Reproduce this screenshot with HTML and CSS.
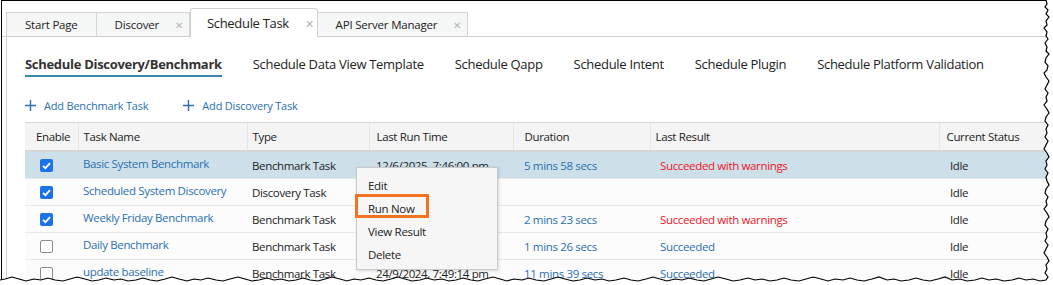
FILE: index.html
```html
<!doctype html>
<html>
<head>
<meta charset="utf-8">
<title>Schedule Task</title>
<link rel="stylesheet" href="styles.css">
</head>
<body>
<div class="shot">
  <div class="window">
    <div class="tabs">
      <div class="tab first">Start Page</div>
      <div class="tab">Discover <span class="close">&#x2715;</span></div>
      <div class="tab active">Schedule Task <span class="close">&#x2715;</span></div>
      <div class="tab">API Server Manager <span class="close">&#x2715;</span></div>
    </div>

    <div class="panel">
      <div class="subtabs">
        <span class="subtab current">Schedule Discovery/Benchmark</span>
        <span class="subtab">Schedule Data View Template</span>
        <span class="subtab">Schedule Qapp</span>
        <span class="subtab">Schedule Intent</span>
        <span class="subtab">Schedule Plugin</span>
        <span class="subtab">Schedule Platform Validation</span>
      </div>

      <div class="actions">
        <a class="add"><svg width="11" height="11" viewBox="0 0 11 11"><path d="M5.5 0v11M0 5.5h11" stroke="#2a70b3" stroke-width="1.4"/></svg>Add Benchmark Task</a>
        <a class="add"><svg width="11" height="11" viewBox="0 0 11 11"><path d="M5.5 0v11M0 5.5h11" stroke="#2a70b3" stroke-width="1.4"/></svg>Add Discovery Task</a>
      </div>

      <table class="grid">
        <colgroup>
          <col class="c-enable"><col class="c-name"><col class="c-type"><col class="c-time"><col class="c-dur"><col class="c-res"><col class="c-stat">
        </colgroup>
        <thead>
          <tr>
            <th class="enable">Enable</th>
            <th>Task Name</th>
            <th>Type</th>
            <th class="time">Last Run Time</th>
            <th class="dur">Duration</th>
            <th>Last Result</th>
            <th class="stat">Current Status</th>
          </tr>
        </thead>
        <tbody>
          <tr class="selected">
            <td class="enable"><span class="check on"></span></td>
            <td><a class="link name">Basic System Benchmark</a></td>
            <td class="type">Benchmark Task</td>
            <td class="time">12/6/2025, 7:46:00 pm</td>
            <td class="dur link">5 mins 58 secs</td>
            <td class="res warn">Succeeded with warnings</td>
            <td class="stat">Idle</td>
          </tr>
          <tr>
            <td class="enable"><span class="check on"></span></td>
            <td><a class="link name">Scheduled System Discovery</a></td>
            <td class="type">Discovery Task</td>
            <td class="time"></td>
            <td class="dur link"></td>
            <td class="res"></td>
            <td class="stat">Idle</td>
          </tr>
          <tr>
            <td class="enable"><span class="check on"></span></td>
            <td><a class="link name">Weekly Friday Benchmark</a></td>
            <td class="type">Benchmark Task</td>
            <td class="time">14/6/2025, 9:00:00 pm</td>
            <td class="dur link">2 mins 23 secs</td>
            <td class="res warn">Succeeded with warnings</td>
            <td class="stat">Idle</td>
          </tr>
          <tr>
            <td class="enable"><span class="check"></span></td>
            <td><a class="link name">Daily Benchmark</a></td>
            <td class="type">Benchmark Task</td>
            <td class="time">2/10/2024, 1:00:00 am</td>
            <td class="dur link">1 mins 26 secs</td>
            <td class="res ok">Succeeded</td>
            <td class="stat">Idle</td>
          </tr>
          <tr>
            <td class="enable"><span class="check"></span></td>
            <td><a class="link name">update baseline</a></td>
            <td class="type">Benchmark Task</td>
            <td class="time">24/9/2024, 7:49:14 pm</td>
            <td class="dur link">11 mins 39 secs</td>
            <td class="res ok">Succeeded</td>
            <td class="stat">Idle</td>
          </tr>
        </tbody>
      </table>
    </div>
  </div>

  <ul class="menu">
    <li>Edit</li>
    <li>Run Now</li>
    <li>View Result</li>
    <li>Delete</li>
  </ul>
  <div class="callout"></div>

  <svg class="torn" width="1053" height="285" viewBox="0 0 1053 285">
    <path fill="#fff" d="M1053 0 L1046 0 1047 4 1045 7 1048 10 1046 14 1049 17 1046 21 1047 25 1044 28 1047 32 1046 36 1048 39 1045 43 1047 47 1046 51 1049 54 1046 58 1045 62 1048 66 1047 70 1044 73 1046 77 1049 81 1047 85 1045 89 1048 93 1046 97 1047 101 1044 105 1047 109 1049 113 1046 117 1045 121 1048 125 1046 129 1047 133 1045 137 1048 141 1046 145 1044 149 1047 153 1049 157 1046 161 1047 165 1045 169 1048 173 1046 177 1047 181 1049 185 1046 189 1045 193 1048 197 1046 201 1047 205 1044 209 1047 213 1049 217 1046 221 1045 225 1048 229 1046 233 1047 237 1045 241 1048 245 1046 249 1044 253 1047 257 1049 261 1046 265 1047 269 1045 273 1048 277 1046 280 1040 281 1033 279 1026 280 1019 278 1012 280 1004 281 996 279 989 280 982 278 975 280 967 281 960 279 952 280 945 277 938 279 930 281 923 280 916 278 909 280 901 281 894 279 887 280 879 277 872 279 864 281 857 280 850 278 843 280 835 279 828 281 821 279 813 277 806 279 799 281 791 280 784 278 777 280 770 281 762 279 755 280 748 278 740 280 733 281 726 279 718 277 711 279 704 281 697 280 689 278 682 280 675 279 667 281 660 279 653 277 646 279 638 281 631 280 624 278 616 280 609 281 602 279 595 280 587 278 580 280 573 281 565 279 558 277 551 279 544 281 536 280 529 278 522 280 514 279 507 281 500 279 493 277 485 279 478 281 471 280 463 278 456 280 449 281 442 279 434 280 427 278 420 280 412 281 405 279 398 277 391 279 383 281 376 280 369 278 361 280 354 279 347 281 340 279 332 277 325 279 318 281 310 280 303 278 296 280 289 281 281 279 274 280 267 278 259 280 252 281 245 279 238 277 230 279 223 281 216 280 208 278 201 280 194 279 187 281 179 279 172 277 165 279 157 281 150 280 143 278 136 280 128 281 121 279 114 280 106 278 99 280 92 281 85 279 77 277 70 279 63 281 55 280 48 278 41 280 34 279 26 281 19 279 12 277 5 279 0 280 L0 285 L1053 285 Z"/>
    <path fill="none" stroke="#000" stroke-width="1.2" d="M1046 0 L1047 4 1045 7 1048 10 1046 14 1049 17 1046 21 1047 25 1044 28 1047 32 1046 36 1048 39 1045 43 1047 47 1046 51 1049 54 1046 58 1045 62 1048 66 1047 70 1044 73 1046 77 1049 81 1047 85 1045 89 1048 93 1046 97 1047 101 1044 105 1047 109 1049 113 1046 117 1045 121 1048 125 1046 129 1047 133 1045 137 1048 141 1046 145 1044 149 1047 153 1049 157 1046 161 1047 165 1045 169 1048 173 1046 177 1047 181 1049 185 1046 189 1045 193 1048 197 1046 201 1047 205 1044 209 1047 213 1049 217 1046 221 1045 225 1048 229 1046 233 1047 237 1045 241 1048 245 1046 249 1044 253 1047 257 1049 261 1046 265 1047 269 1045 273 1048 277 1046 280 1040 281 1033 279 1026 280 1019 278 1012 280 1004 281 996 279 989 280 982 278 975 280 967 281 960 279 952 280 945 277 938 279 930 281 923 280 916 278 909 280 901 281 894 279 887 280 879 277 872 279 864 281 857 280 850 278 843 280 835 279 828 281 821 279 813 277 806 279 799 281 791 280 784 278 777 280 770 281 762 279 755 280 748 278 740 280 733 281 726 279 718 277 711 279 704 281 697 280 689 278 682 280 675 279 667 281 660 279 653 277 646 279 638 281 631 280 624 278 616 280 609 281 602 279 595 280 587 278 580 280 573 281 565 279 558 277 551 279 544 281 536 280 529 278 522 280 514 279 507 281 500 279 493 277 485 279 478 281 471 280 463 278 456 280 449 281 442 279 434 280 427 278 420 280 412 281 405 279 398 277 391 279 383 281 376 280 369 278 361 280 354 279 347 281 340 279 332 277 325 279 318 281 310 280 303 278 296 280 289 281 281 279 274 280 267 278 259 280 252 281 245 279 238 277 230 279 223 281 216 280 208 278 201 280 194 279 187 281 179 279 172 277 165 279 157 281 150 280 143 278 136 280 128 281 121 279 114 280 106 278 99 280 92 281 85 279 77 277 70 279 63 281 55 280 48 278 41 280 34 279 26 281 19 279 12 277 5 279 0 280"/>
  </svg>
</div>
</body>
</html>
```

FILE: styles.css
```css
html, body { margin:0; padding:0; background:#fff; }

.shot {
  position:relative;
  width:1053px;
  height:285px;
  overflow:hidden;
  font-family:"Open Sans", "Noto Sans", sans-serif;
  color:#222;
}

.window {
  margin-left:1px;
  height:100%;
  border-left:1px solid #000;
  border-top:1px solid #000;
  box-sizing:border-box;
}

/* top tabs */
.tabs {
  display:flex;
  align-items:flex-end;
  padding:7px 0 0 4px;
  border-bottom:1px solid #cfcfcf;
}

.tab {
  display:flex;
  align-items:center;
  height:23px;
  padding:0 6px 0 18px;
  font-size:11.5px;
  letter-spacing:-0.2px;
  color:#222;
  background:#f5f6f6;
  border:1px solid #d4d4d4;
  border-bottom:none;
  border-left:none;
}
.tab.first { border-left:1px solid #d4d4d4; padding-right:18px; }

.tab .close {
  margin-left:16px;
  font-size:10px;
  color:#b5b5b5;
}

.tab.active {
  height:28px;
  margin-bottom:-1px;
  padding-left:16px;
  padding-right:3px;
  font-size:13px;
  letter-spacing:-0.3px;
  background:#fff;
  border:1px solid #cfcfcf;
  border-bottom:none;
  border-radius:3px 3px 0 0;
}
.tab.active .close { margin-left:16px; font-size:11px; }

/* panel */
.panel {
  margin-left:4px;
  height:100%;
  padding-left:18px;
  border-left:1px solid #cfcfcf;
}

.subtabs {
  display:flex;
  gap:31px;
  padding-top:18px;
}
.subtab {
  font-size:13px;
  letter-spacing:-0.3px;
  line-height:18px;
  padding-bottom:2px;
  color:#222;
}
.subtab.current {
  font-weight:bold;
  color:#333;
  border-bottom:2px solid #3a87b0;
}

.actions {
  display:flex;
  gap:35px;
  padding-top:19px;
  height:18px;
}
.add {
  display:flex;
  align-items:center;
  gap:8px;
  font-size:11px;
  letter-spacing:-0.2px;
  color:#2a70b3;
}

/* grid */
.grid {
  margin-top:8px;
  width:1100px;
  table-layout:fixed;
  border-collapse:collapse;
  font-size:11.5px;
  letter-spacing:-0.35px;
}
.c-enable { width:53px; }
.c-name { width:169px; }
.c-type { width:122px; }
.c-time { width:144px; }
.c-dur { width:137px; }
.c-res { width:289px; }
.c-stat { width:186px; }

.grid th {
  height:27px;
  padding:0 0 0 5px;
  text-align:left;
  font-weight:normal;
  color:#222;
  background:#f4f4f4;
  border-top:1px solid #d6d6d6;
  border-bottom:2px solid #d6d6d6;
  border-left:1px solid #e6e6e6;
}
.grid th.enable { border-left:none; padding-left:11px; }
.grid th.time { padding-left:7px; }
.grid th.dur { padding-left:11px; }
.grid th.stat { padding-left:7px; }

.grid td {
  height:26px;
  padding:0 0 0 5px;
  border-bottom:1px solid #e8e8e8;
  background:#fcfcfc;
  white-space:nowrap;
}
.grid tr.selected td { background:#cde0ea; }
.grid td.enable { padding-left:15px; }
.grid td.time { padding-left:7px; }
.grid td.dur { padding-left:11px; }
.grid td.res { padding-left:10px; }
.grid td.stat { padding-left:11px; }

.link { color:#2a70b3; }
.name { position:relative; top:-2px; }
.warn { color:#f0141e; }
.ok { color:#2a70b3; }

.check {
  display:block;
  width:11px;
  height:11px;
  border:1px solid #8d8d8d;
  border-radius:2px;
  background:#fff;
}
.check.on {
  width:13px;
  height:13px;
  border:none;
  background:#1a73e8 url("data:image/svg+xml;utf8,<svg xmlns='http://www.w3.org/2000/svg' viewBox='0 0 13 13'><path d='M3 6.8l2.4 2.4L10 4.2' fill='none' stroke='white' stroke-width='1.8'/></svg>") no-repeat center;
}

/* context menu over the grid */
.menu {
  position:absolute;
  left:356px;
  top:167px;
  width:140px;
  margin:0;
  padding:6px 0 3px;
  list-style:none;
  background:#f6f6f6;
  border:1px solid #c9c9c9;
  box-shadow:1px 1px 3px rgba(0,0,0,.15);
  font-size:11.5px;
  letter-spacing:-0.3px;
}
.menu li {
  line-height:23px;
  padding-left:11px;
  color:#222;
}

.callout {
  position:absolute;
  left:355px;
  top:194px;
  width:68px;
  height:18px;
  border:3px solid #f47321;
}

.torn {
  position:absolute;
  left:0;
  top:0;
}
```
